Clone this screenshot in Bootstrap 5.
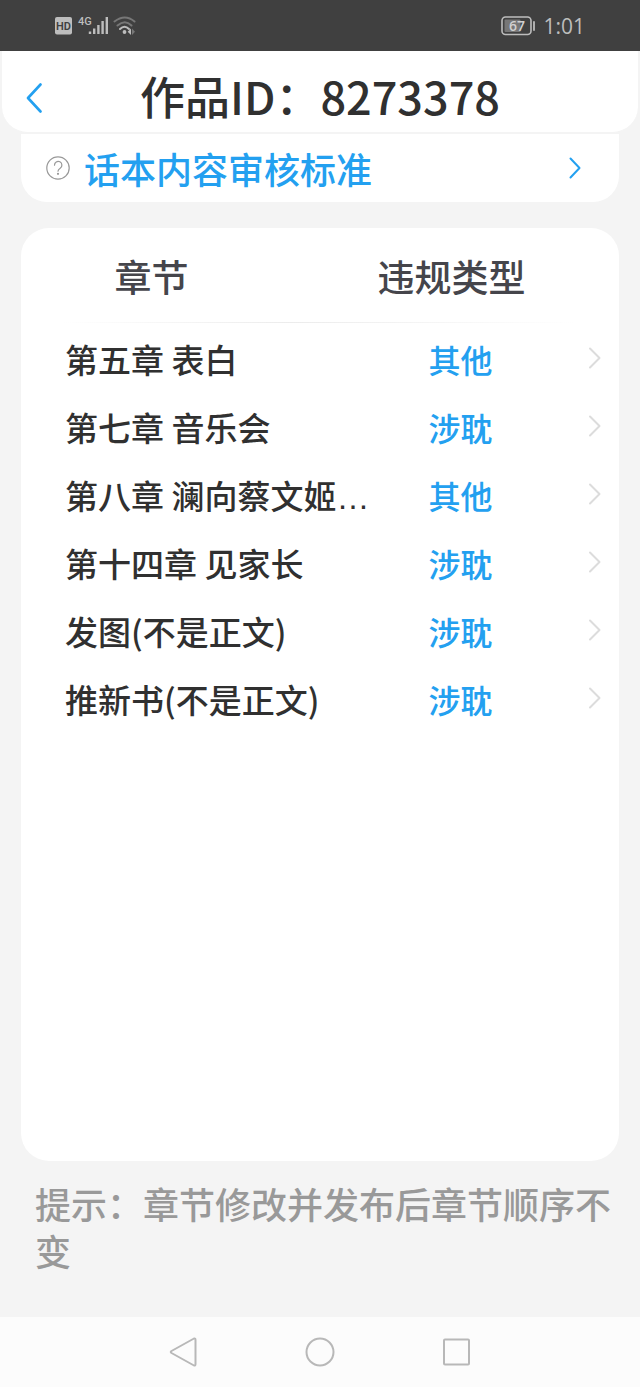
<!DOCTYPE html>
<html lang="zh-CN">
<head>
<meta charset="utf-8">
<meta name="viewport" content="width=device-width, initial-scale=1">
<title>作品ID：8273378</title>
<link href="https://cdn.jsdelivr.net/npm/bootstrap@5.3.0/dist/css/bootstrap.min.css" rel="stylesheet">
<style>
  body { background: #f4f4f4; color: #303030; font-family: "Noto Sans CJK SC", sans-serif; font-weight: 500; }
  svg { display: block; flex: none; fill: none; stroke-linecap: round; stroke-linejoin: round; }
  .status-bar { height: 51px; background: #404040; color: #bdbdbd; padding: 0 55px 0 54px; font-family: "Open Sans", sans-serif; }
  .status-bar svg text { stroke: none; }
  .clock { font-size: 21px; line-height: 24px; font-weight: 500; }
  .title-bar { height: 82px; margin: 0 2px; padding-top: 8px; border-bottom: 1px solid #f4f4f4; border-radius: 0 0 26px 26px; }
  .title-bar .back { left: 16px; top: 24px; color: #23a0f0; }
  .title-bar h1 { font-size: 45px; line-height: 56px; font-weight: 500; }
  .rule-link { height: 68px; margin: 1px 21px 0; padding: 0 37px 0 25px; border-radius: 0 0 26px 26px; }
  .rule-link, .chapters a { color: #23a0f0; }
  .rule-link span { padding-left: 14px; font-size: 36px; line-height: 48px; }
  .panel { margin: 26px 21px 0; border-radius: 28px; }
  .chapters { table-layout: fixed; }
  .chapters th, .chapters td { padding: 0; vertical-align: middle; font-weight: 500; }
  .chapters thead th { height: 96px; font-size: 37px; line-height: 48px; color: #45454b; text-align: center; }
  .chapters thead th:first-child { padding-right: 86px; }
  .chapters thead th:nth-child(2) { padding-right: 18px; }
  .chapters thead { background: linear-gradient(90deg, transparent 7%, #ececec 45%, transparent 93%) 0 94px / 100% 1px no-repeat; }
  .chapters tbody tr { height: 68px; font-size: 33px; line-height: 44px; }
  .chapters tbody th { padding: 2px 0 0 44px; white-space: nowrap; }
  .chapters tbody td:nth-child(2) { padding-top: 2px; font-size: 32px; text-align: center; }
  .chapters .go { display: flex; padding-left: 35px; }
  .more { font-family: "Liberation Sans", sans-serif; line-height: 1; }
  .tip { padding: 19px 24px 43px 35px; font-size: 36px; line-height: 47px; color: #999; }
  .system-nav { height: 70px; background: #fcfcfc; gap: 108px; }
  .system-nav svg { stroke: #b8b8b8; stroke-width: 2; }
</style>
</head>
<body class="min-vh-100 d-flex flex-column">
  <div class="status-bar d-flex align-items-center justify-content-between">
    <svg width="84" height="26" viewBox="0 0 84 26" stroke="#bdbdbd">
      <rect x="1" y="4" width="17" height="17.500" rx="2" fill="#bdbdbd" stroke="none"/>
      <text x="9.500" y="17" text-anchor="middle" font-size="11" font-weight="600" font-family="Roboto" fill="#404040">HD</text>
      <text x="24" y="12" font-size="11" font-weight="500" font-family="Roboto" fill="#bdbdbd">4G</text>
      <path d="M36 18.500v2.500M40.200 15.500v5.500M44.400 12v9M48.600 8v13M52.800 4v17" stroke-width="2.400" stroke-linecap="butt"/>
      <path d="M60.500 8.500Q71 .5 80.500 8.500M63.500 12.500Q71 6 77.500 12.500" stroke="#777" stroke-width="2"/>
      <path d="M66 16Q70.500 11.500 75 16" stroke-width="2"/>
      <circle cx="70.500" cy="19" r="1.900" fill="#bdbdbd" stroke="none"/>
      <path d="M77 15.500v6.500l-3.300-3.200z" fill="#bdbdbd" stroke="none"/><path d="M78 15.500v6.500l3-3.200z" fill="#777" stroke="none"/>
    </svg>
    <div class="d-flex align-items-center gap-2">
      <svg width="36" height="20" viewBox="0 0 36 20">
        <rect x="3" y="1" width="29" height="17.500" rx="3.500" stroke="#bdbdbd" stroke-width="1.600"/>
        <rect x="5.500" y="3.500" width="16" height="12.500" rx="1" fill="#777"/>
        <text x="18" y="15" text-anchor="middle" font-size="14" font-weight="600" fill="#d0d0d0">67</text>
        <path d="M35 6v8" stroke="#bdbdbd" stroke-width="1.800"/>
      </svg>
      <span class="clock">1:01</span>
    </div>
  </div>

  <header class="title-bar bg-white position-relative d-flex align-items-center justify-content-center">
    <button type="button" class="back btn p-2 border-0 position-absolute" aria-label="返回">
      <svg width="16" height="30" viewBox="0 0 16 30" stroke="currentColor" stroke-width="2.600"><path d="M14.500 1.500L2 15l12.500 13.500"/></svg>
    </button>
    <h1 class="m-0">作品ID：8273378</h1>
  </header>

  <a href="#rules" class="rule-link bg-white d-flex align-items-center text-decoration-none">
    <svg width="24" height="24" viewBox="0 0 24 24" stroke="#999" stroke-width="1.200">
      <circle cx="12" cy="12" r="11.200"/>
      <path d="M8.500 9.200a3.700 3.700 0 1 1 5.700 3c-1.500 1-2.200 1.600-2.200 3"/><circle cx="12" cy="17.800" r=".5" fill="#999"/>
    </svg>
    <span class="flex-grow-1">话本内容审核标准</span>
    <svg width="14" height="22" viewBox="0 0 14 22" stroke="currentColor" stroke-width="2"><path d="M2.500 1.500L11.500 11l-9 9.500"/></svg>
  </a>

  <main class="panel bg-white flex-grow-1">
    <table class="chapters w-100">
      <colgroup><col style="width:58%"><col style="width:31%"><col style="width:11%"></colgroup>
      <thead><tr><th scope="col">章节</th><th scope="col">违规类型</th><td></td></tr></thead>
      <tbody>
        <tr><th scope="row">第五章 表白</th><td><a class="text-decoration-none" href="#c5">其他</a></td><td><a class="go" href="#c5" aria-label="查看第五章"><svg width="14" height="22" viewBox="0 0 14 22" stroke="#dcdcdc" stroke-width="2"><path d="M2 1.500L11.500 11 2 20.500"/></svg></a></td></tr>
        <tr><th scope="row">第七章 音乐会</th><td><a class="text-decoration-none" href="#c7">涉耽</a></td><td><a class="go" href="#c7" aria-label="查看第七章"><svg width="14" height="22" viewBox="0 0 14 22" stroke="#dcdcdc" stroke-width="2"><path d="M2 1.500L11.500 11 2 20.500"/></svg></a></td></tr>
        <tr><th scope="row">第八章 澜向蔡文姬<span class="more">…</span></th><td><a class="text-decoration-none" href="#c8">其他</a></td><td><a class="go" href="#c8" aria-label="查看第八章"><svg width="14" height="22" viewBox="0 0 14 22" stroke="#dcdcdc" stroke-width="2"><path d="M2 1.500L11.500 11 2 20.500"/></svg></a></td></tr>
        <tr><th scope="row">第十四章 见家长</th><td><a class="text-decoration-none" href="#c14">涉耽</a></td><td><a class="go" href="#c14" aria-label="查看第十四章"><svg width="14" height="22" viewBox="0 0 14 22" stroke="#dcdcdc" stroke-width="2"><path d="M2 1.500L11.500 11 2 20.500"/></svg></a></td></tr>
        <tr><th scope="row">发图(不是正文)</th><td><a class="text-decoration-none" href="#pic">涉耽</a></td><td><a class="go" href="#pic" aria-label="查看发图"><svg width="14" height="22" viewBox="0 0 14 22" stroke="#dcdcdc" stroke-width="2"><path d="M2 1.500L11.500 11 2 20.500"/></svg></a></td></tr>
        <tr><th scope="row">推新书(不是正文)</th><td><a class="text-decoration-none" href="#new">涉耽</a></td><td><a class="go" href="#new" aria-label="查看推新书"><svg width="14" height="22" viewBox="0 0 14 22" stroke="#dcdcdc" stroke-width="2"><path d="M2 1.500L11.500 11 2 20.500"/></svg></a></td></tr>
      </tbody>
    </table>
  </main>

  <p class="tip m-0">提示：章节修改并发布后章节顺序不变</p>

  <nav class="system-nav d-flex align-items-center justify-content-center" aria-label="系统导航">
    <button type="button" class="btn p-0 border-0" aria-label="返回"><svg width="28" height="30" viewBox="0 0 28 30"><path d="M25 1.500Q26.500 1 26.500 3v24q0 2-1.500 1.500L2.500 16q-1.500-1 0-2z"/></svg></button>
    <button type="button" class="btn p-0 border-0" aria-label="主屏幕"><svg width="30" height="30" viewBox="0 0 30 30"><circle cx="15" cy="15" r="13.500"/></svg></button>
    <button type="button" class="btn p-0 border-0" aria-label="最近任务"><svg width="28" height="28" viewBox="0 0 28 28"><rect x="1" y="1.500" width="25" height="25" rx="1"/></svg></button>
  </nav>
<script src="https://cdn.jsdelivr.net/npm/bootstrap@5.3.0/dist/js/bootstrap.bundle.min.js"></script>
</body>
</html>
